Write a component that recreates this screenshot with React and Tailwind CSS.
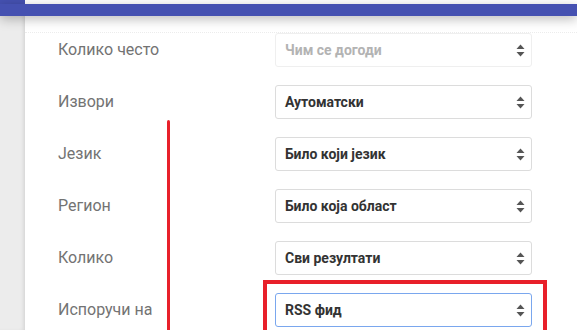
import React from 'react';

const rows = [
  { label: 'Колико често', value: 'Чим се догоди', placeholder: true },
  { label: 'Извори', value: 'Аутоматски' },
  { label: 'Језик', value: 'Било који језик' },
  { label: 'Регион', value: 'Било која област' },
  { label: 'Колико', value: 'Сви резултати' },
  { label: 'Испоручи на', value: 'RSS фид', focused: true },
];

const Arrows = () => (
  <svg width="9" height="13" viewBox="0 0 9 13" className="shrink-0">
    <path d="M4.5 0.5 L8.5 5 L0.5 5 Z" fill="#555" />
    <path d="M0.5 8 L8.5 8 L4.5 12.5 Z" fill="#555" />
  </svg>
);

const Select = ({ value, placeholder, focused }) => (
  <div
    className={`w-[257px] h-[34px] flex items-center justify-between pl-[9px] pr-[6px] rounded-[3px] bg-white border ${
      focused ? 'border-[#7aa7ee]' : placeholder ? 'border-[#efefef]' : 'border-[#dcdcdc]'
    }`}
  >
    <span className={`text-[14px] font-bold ${placeholder ? 'text-[#b3b3b3]' : 'text-[#333]'}`}>{value}</span>
    <Arrows />
  </div>
);

const App = () => {
  return (
    <div className="w-[577px] h-[330px] overflow-hidden relative bg-[#ededed] flex flex-col" style={{ fontFamily: 'Roboto, "Noto Sans", sans-serif' }}>
      <div className="flex h-[4px] shrink-0">
        <div className="w-[25px] bg-[#4551b1]"></div>
        <div className="flex-1 bg-white"></div>
      </div>
      <div className="h-[12px] bg-[#4551b1] shrink-0 relative z-10 shadow-[0_3px_12px_rgba(0,0,0,0.28)]"></div>

      <div className="flex flex-1">
        <div className="w-[25px] bg-[#ececec] shadow-[inset_-3px_0_4px_-2px_rgba(0,0,0,0.12)]"></div>
        <div className="flex-1 bg-white">
          <div className="h-[1px] mt-[16px] border-t border-dotted border-[#ececec]"></div>
          <div className="flex flex-col gap-[18px] pl-[33px]">
            {rows.map((r) => (
              <div key={r.label} className="flex items-center">
                <div className="w-[217px] text-[16px] text-[#737373]">{r.label}</div>
                <Select value={r.value} placeholder={r.placeholder} focused={r.focused} />
              </div>
            ))}
          </div>
        </div>
      </div>

      <div className="absolute left-[167px] top-[120px] w-[3px] h-[220px] bg-[#e8202a] rounded-t-sm"></div>
      <div className="absolute left-[263px] top-[280px] w-[284px] h-[80px] border-4 border-[#e8202a]"></div>
    </div>
  );
};

export default App;
